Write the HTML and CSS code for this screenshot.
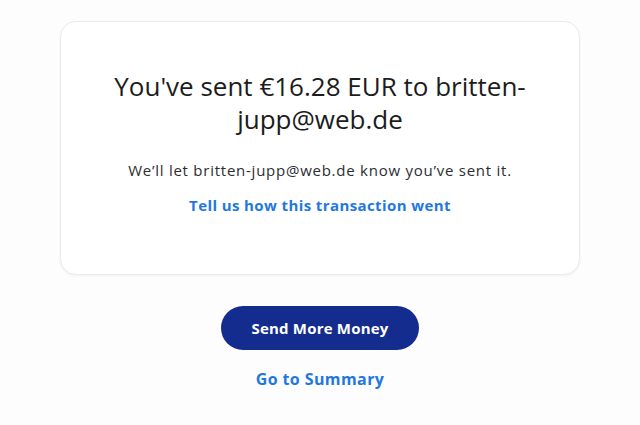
FILE: index.html
```html
<!DOCTYPE html>
<html lang="en">
<head>
<meta charset="utf-8">
<title>Sent</title>
<link rel="stylesheet" href="styles.css">
</head>
<body>
<main class="page">
  <section class="card">
    <h1 class="title">You've sent €16.28 EUR to britten-jupp@web.de</h1>
    <p class="note">We’ll let britten-jupp@web.de know you’ve sent it.</p>
    <a class="link feedback" href="#">Tell us how this transaction went</a>
  </section>
  <div class="actions">
    <a class="btn" href="#">Send More Money</a>
    <a class="link summary" href="#">Go to Summary</a>
  </div>
</main>
</body>
</html>
```
FILE: styles.css
```css
html, body {
  margin: 0;
  padding: 0;
  background: #fdfdfd;
}
body {
  font-family: "Open Sans", "Noto Sans", sans-serif;
  color: #2c2e2f;
}
.page {
  width: 520px;
  margin: 0 auto;
  padding-top: 21px;
  display: flex;
  flex-direction: column;
  align-items: center;
}
.card {
  box-sizing: border-box;
  width: 520px;
  height: 254px;
  background: #fff;
  border: 1px solid #ebebeb;
  border-radius: 16px;
  box-shadow: 0 1px 3px rgba(0,0,0,0.05);
  display: flex;
  flex-direction: column;
  align-items: center;
  padding: 48px 40px 0;
  text-align: center;
}
.title {
  margin: 0;
  font-size: 26px;
  font-weight: 400;
  line-height: 33px;
  color: #1c1c1c;
  width: 430px;
}
.note {
  margin: 24px 0 0;
  font-size: 15px;
  line-height: 20px;
  letter-spacing: 0.75px;
  color: #2c2e2f;
}
.link {
  color: #1f78e0;
  font-weight: 700;
  text-decoration: none;
  font-size: 15px;
  line-height: 20px;
  letter-spacing: 0.4px;
}
.feedback {
  margin-top: 15px;
}
.actions {
  margin-top: 31px;
  display: flex;
  flex-direction: column;
  align-items: center;
}
.btn {
  width: 198px;
  height: 44px;
  border-radius: 22px;
  background: #142c8e;
  color: #fff;
  font-weight: 700;
  font-size: 15px;
  letter-spacing: 0.2px;
  display: flex;
  align-items: center;
  justify-content: center;
  text-decoration: none;
}
.summary {
  margin-top: 19px;
  font-size: 16px;
}
```
